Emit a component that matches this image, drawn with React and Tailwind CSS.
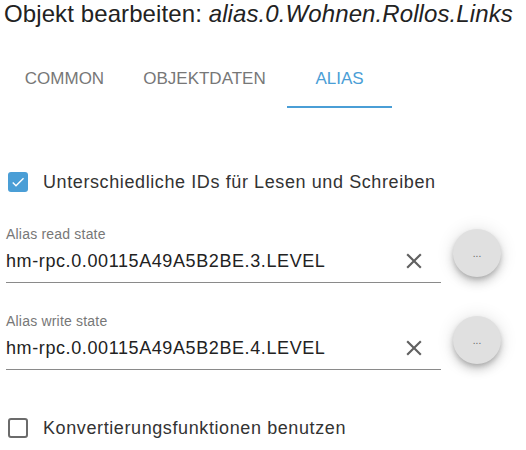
import React, { useState } from 'react';

const font = { fontFamily: '"Liberation Sans", Arial, sans-serif' };

function ClearIcon() {
  return (
    <svg width="26" height="26" viewBox="0 0 24 24" className="fill-[#616161] shrink-0">
      <path d="M19 6.41L17.59 5 12 10.59 6.41 5 5 6.41 10.59 12 5 17.59 6.41 19 12 13.41 17.59 19 19 17.59 13.41 12z" />
    </svg>
  );
}

function Check({ checked, label, className }) {
  return (
    <div className={`flex items-center h-[20px] ${className}`}>
      <div className="w-[43px] shrink-0 pl-[8px]">
        {checked ? (
          <div className="w-[20px] h-[20px] rounded-[3px] bg-[#4a9ed6] flex items-center justify-center">
            <svg width="16" height="16" viewBox="0 0 24 24" className="fill-white">
              <path d="M9 16.17L4.83 12l-1.42 1.41L9 19 21 7l-1.41-1.41z" />
            </svg>
          </div>
        ) : (
          <div className="w-[20px] h-[20px] rounded-[3px] border-2 border-[#6b6b6b]" />
        )}
      </div>
      <span className="text-[18px] leading-[24px] tracking-[0.6px] text-[#333]">{label}</span>
    </div>
  );
}

function StateField({ label, value, className }) {
  return (
    <div className={`flex items-center pl-[6px] ${className}`}>
      <div className="w-[435px] flex flex-col">
        <span className="text-[14px] leading-[16px] tracking-[0.2px] text-[#777]">{label}</span>
        <div className="mt-[6px] flex items-center border-b border-[#8a8a8a] pb-[8px] pr-[14px]">
          <span className="flex-1 text-[18px] leading-[24px] tracking-[0.6px] text-[#222]">{value}</span>
          <ClearIcon />
        </div>
      </div>
      <button className="ml-[12px] mb-[3px] w-[48px] h-[48px] rounded-full bg-[#e0e0e0] flex items-center justify-center text-[10px] text-[#666] shadow-[0_3px_5px_-1px_rgba(0,0,0,0.2),0_6px_10px_0_rgba(0,0,0,0.14),0_1px_18px_0_rgba(0,0,0,0.12)]">
        ...
      </button>
    </div>
  );
}

export default function App() {
  const [tab, setTab] = useState(2);
  const tabs = [
    { name: 'COMMON', w: 'w-[115px]' },
    { name: 'OBJEKTDATEN', w: 'w-[165px]' },
    { name: 'ALIAS', w: 'w-[105px]' },
  ];

  return (
    <div className="w-[526px] h-[450px] bg-white overflow-hidden flex flex-col" style={font}>
      <h1 className="pl-[4px] text-[24px] leading-[28px] tracking-[0.1px] text-[#222] whitespace-nowrap">
        Objekt bearbeiten: <i>alias.0.Wohnen.Rollos.Links</i>
      </h1>

      <div className="flex pl-[7px] mt-[41px]">
        {tabs.map((t, i) => (
          <button
            key={t.name}
            onClick={() => setTab(i)}
            className={`${t.w} flex flex-col items-center`}
          >
            <span className={`text-[17px] leading-[20px] ${tab === i ? 'text-[#4a9ed6]' : 'text-[#777]'}`}>
              {t.name}
            </span>
            <span className={`mt-[17px] h-[2px] w-full ${tab === i ? 'bg-[#4a9ed6]' : 'bg-transparent'}`} />
          </button>
        ))}
      </div>

      <Check checked label="Unterschiedliche IDs für Lesen und Schreiben" className="mt-[64px]" />

      <StateField label="Alias read state" value="hm-rpc.0.00115A49A5B2BE.3.LEVEL" className="mt-[34px]" />
      <StateField label="Alias write state" value="hm-rpc.0.00115A49A5B2BE.4.LEVEL" className="mt-[30px]" />

      <Check label="Konvertierungsfunktionen benutzen" className="mt-[48px]" />
    </div>
  );
}
